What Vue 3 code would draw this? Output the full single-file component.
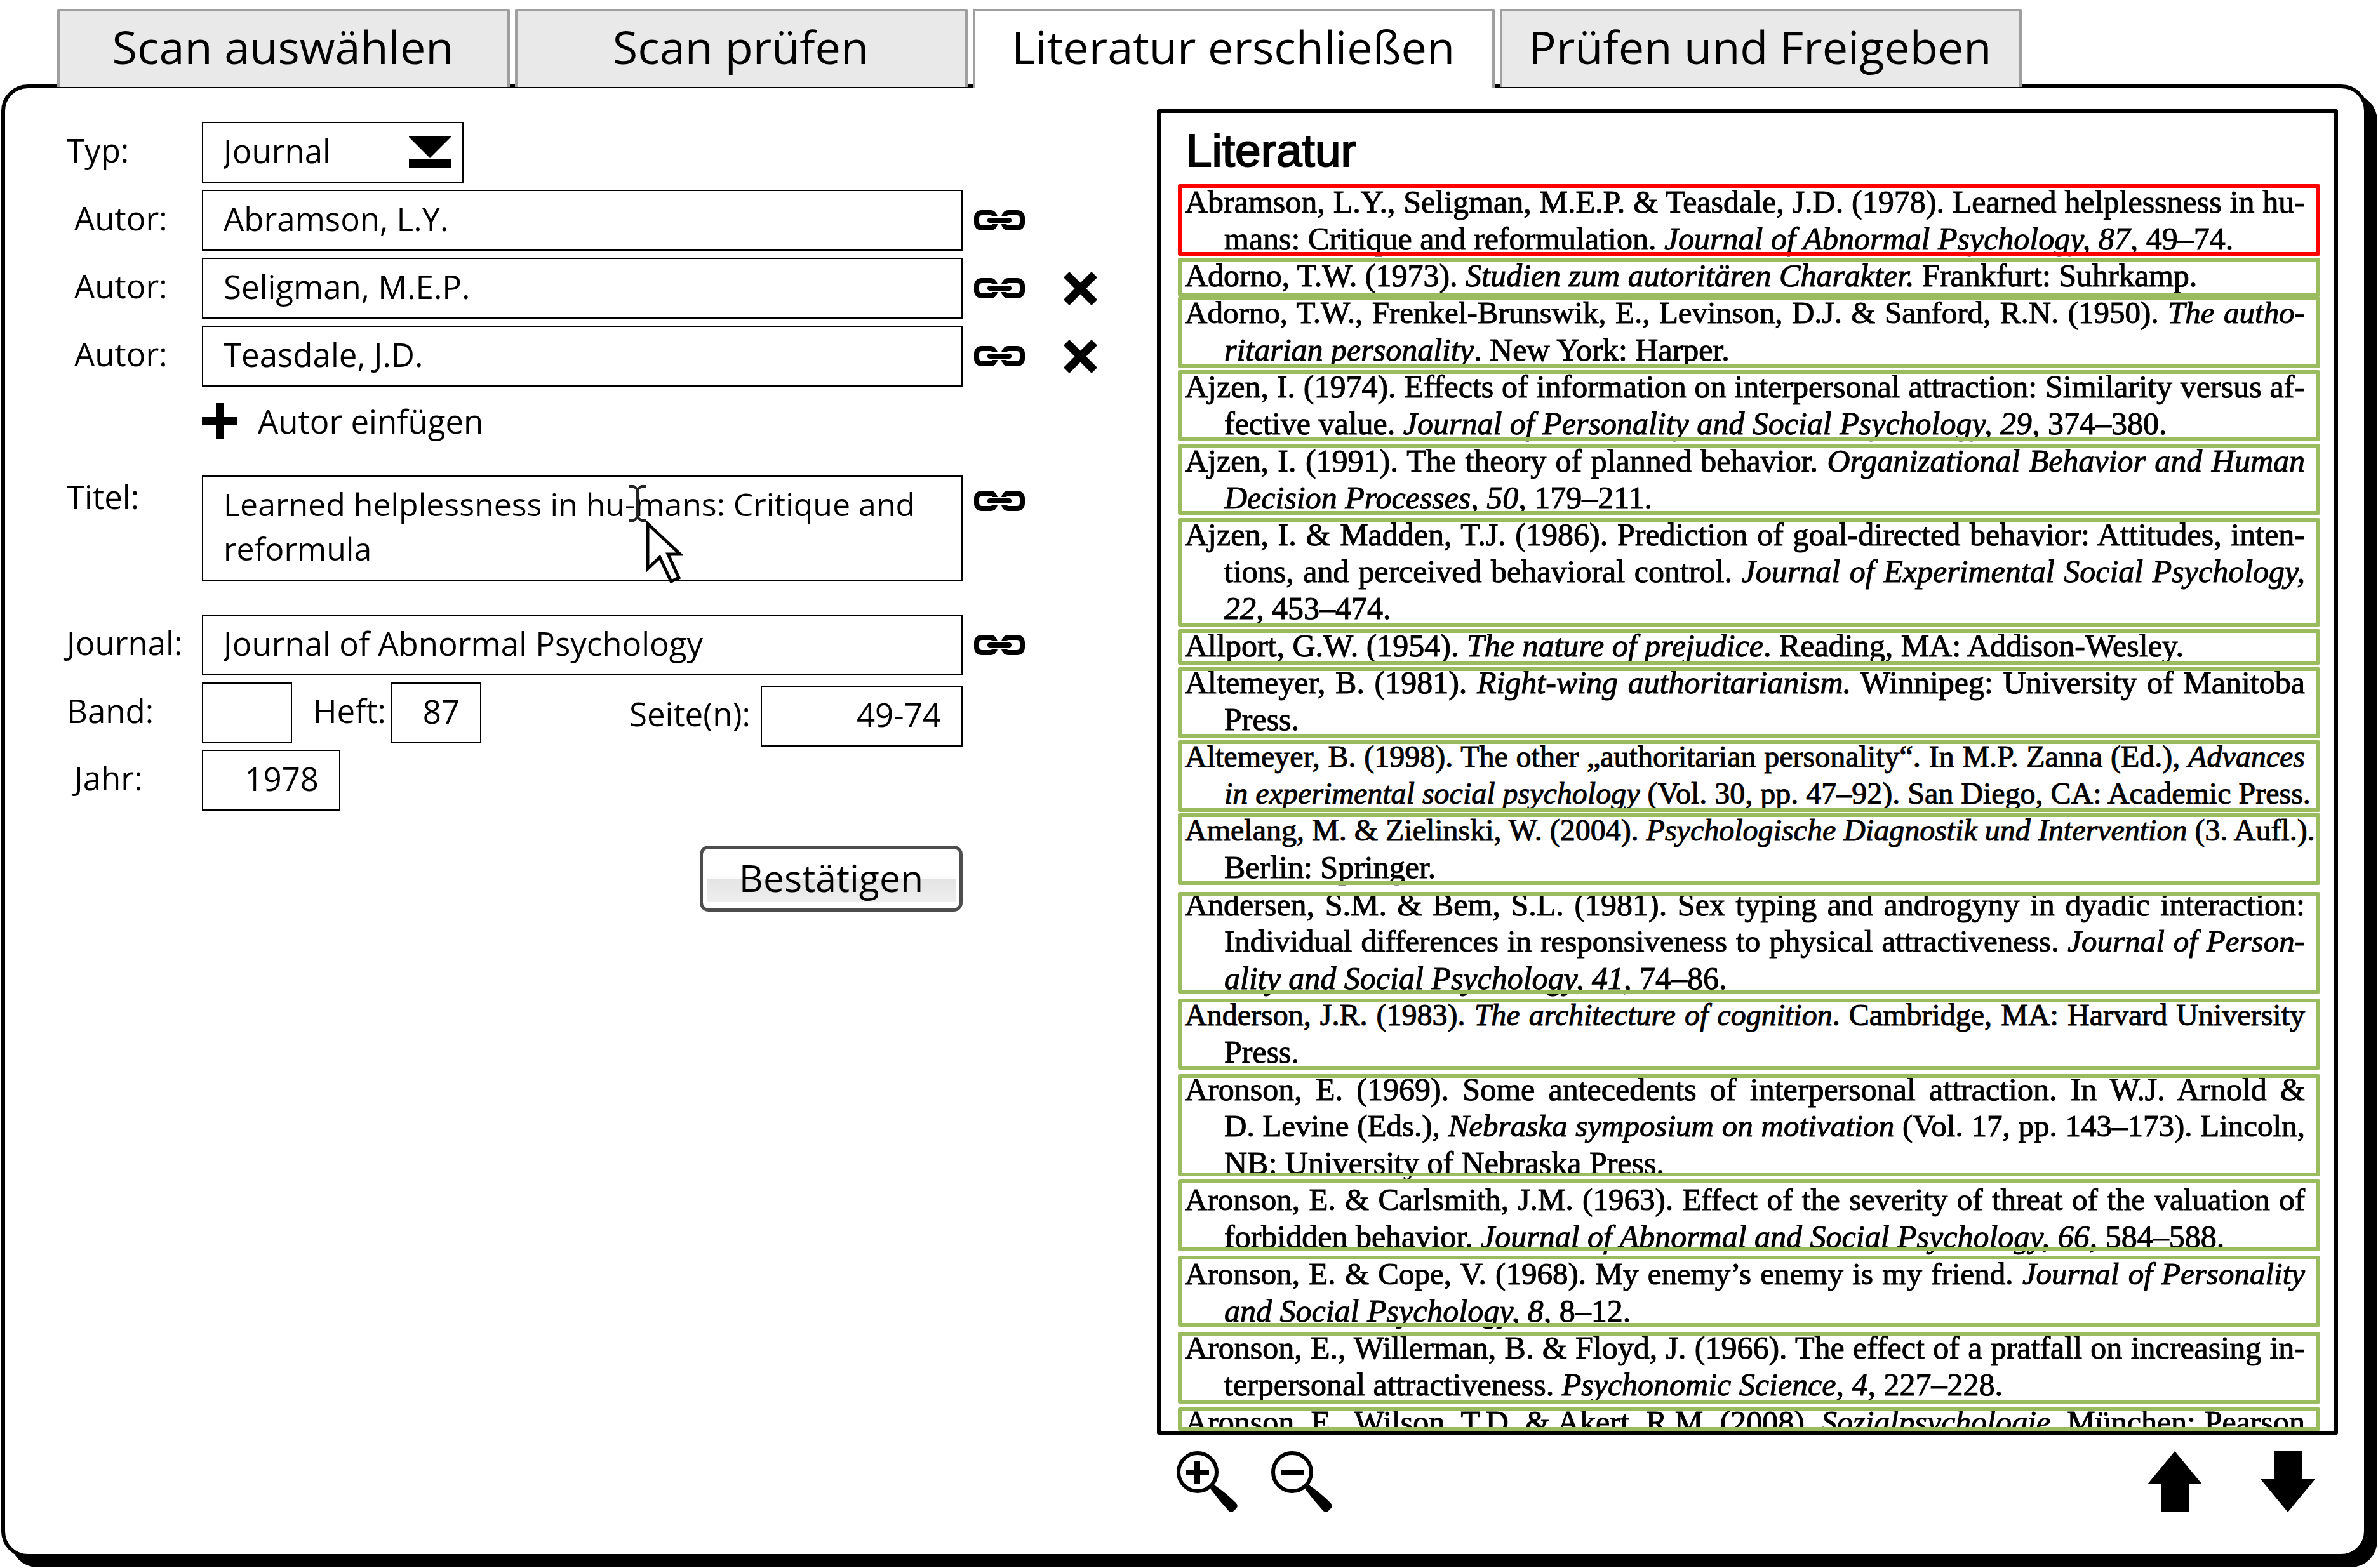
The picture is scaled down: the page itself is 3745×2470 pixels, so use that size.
<script setup>
import { ref } from 'vue'

const tabs = ['Scan auswählen', 'Scan prüfen', 'Literatur erschließen', 'Prüfen und Freigeben']
const active = ref(2)

const typ = ref('Journal')
const authors = ref(['Abramson, L.Y.', 'Seligman, M.E.P.', 'Teasdale, J.D.'])
const title = ref('Learned helplessness in hu-mans: Critique and\nreformula')
const journal = ref('Journal of Abnormal Psychology')
const band = ref('')
const heft = ref('87')
const seiten = ref('49-74')
const jahr = ref('1978')

// top / height: detected region of each reference, relative to its first text line.
// Text between asterisks is set in italics. snug / tight: indexes of lines that
// hold more words than the column takes at the normal size.
const entries = [
  { top: 1, height: 113, lines: ['Abramson, L.Y., Seligman, M.E.P. & Teasdale, J.D. (1978). Learned helplessness in hu-', 'mans: Critique and reformulation. *Journal of Abnormal Psychology, 87,* 49–74.'] },
  { top: 1, height: 61, lines: ['Adorno, T.W. (1973). *Studien zum autoritären Charakter.* Frankfurt: Suhrkamp.'] },
  { top: 3, height: 113, snug: [0], lines: ['Adorno, T.W., Frenkel-Brunswik, E., Levinson, D.J. & Sanford, R.N. (1950). *The autho-*', '*ritarian personality*. New York: Harper.'] },
  { top: 3, height: 112, lines: ['Ajzen, I. (1974). Effects of information on interpersonal attraction: Similarity versus af-', 'fective value. *Journal of Personality and Social Psychology, 29,* 374–380.'] },
  { top: 2, height: 112, lines: ['Ajzen, I. (1991). The theory of planned behavior. *Organizational Behavior and Human*', '*Decision Processes, 50,* 179–211.'] },
  { top: 3, height: 171, lines: ['Ajzen, I. & Madden, T.J. (1986). Prediction of goal-directed behavior: Attitudes, inten-', 'tions, and perceived behavioral control. *Journal of Experimental Social Psychology,*', '*22,* 453–474.'] },
  { top: 3, height: 56, lines: ['Allport, G.W. (1954). *The nature of prejudice*. Reading, MA: Addison-Wesley.'] },
  { top: 5, height: 112, lines: ['Altemeyer, B. (1981). *Right-wing authoritarianism.* Winnipeg: University of Manitoba', 'Press.'] },
  { top: 3, height: 113, tight: [0, 1], lines: ['Altemeyer, B. (1998). The other „authoritarian personality“. In M.P. Zanna (Ed.), *Advances*', '*in experimental social psychology* (Vol. 30, pp. 47–92). San Diego, CA: Academic Press.'] },
  { top: 2, height: 113, tight: [0], lines: ['Amelang, M. & Zielinski, W. (2004). *Psychologische Diagnostik und Intervention* (3. Aufl.).', 'Berlin: Springer.'] },
  { top: 9, height: 161, snug: [1], lines: ['Andersen, S.M. & Bem, S.L. (1981). Sex typing and androgyny in dyadic interaction:', 'Individual differences in responsiveness to physical attractiveness. *Journal of Person-*', '*ality and Social Psychology, 41,* 74–86.'] },
  { top: 3, height: 112, tight: [0], lines: ['Anderson, J.R. (1983). *The architecture of cognition*. Cambridge, MA: Harvard University', 'Press.'] },
  { top: 5, height: 161, snug: [1], lines: ['Aronson, E. (1969). Some antecedents of interpersonal attraction. In W.J. Arnold &', 'D. Levine (Eds.), *Nebraska symposium on motivation* (Vol. 17, pp. 143–173). Lincoln,', 'NB: University of Nebraska Press.'] },
  { top: -3, height: 113, snug: [0], lines: ['Aronson, E. & Carlsmith, J.M. (1963). Effect of the severity of threat of the valuation of', 'forbidden behavior. *Journal of Abnormal and Social Psychology, 66,* 584–588.'] },
  { top: 0, height: 112, snug: [0], lines: ['Aronson, E. & Cope, V. (1968). My enemy’s enemy is my friend. *Journal of Personality*', '*and Social Psychology, 8,* 8–12.'] },
  { top: 4, height: 113, lines: ['Aronson, E., Willerman, B. & Floyd, J. (1966). The effect of a pratfall on increasing in-', 'terpersonal attractiveness. *Psychonomic Science, 4,* 227–228.'] },
  { top: 6, height: 37, cut: true, lines: ['Aronson, E., Wilson, T.D. & Akert, R.M. (2008). *Sozialpsychologie.* München: Pearson'] },
]
const selected = ref(0)

const parts = (line) => line.split('*').map((text, i) => ({ text, italic: i % 2 === 1 })).filter((p) => p.text)
const lineClass = (entry, i) => ({
  full: entry.cut || i < entry.lines.length - 1 || entry.tight?.includes(i),
  hang: i > 0,
  snug: entry.snug?.includes(i),
  tight: entry.tight?.includes(i),
})
</script>

<template>
  <div class="page">
    <nav class="tabs">
      <button v-for="(tab, i) in tabs" :key="tab" type="button" class="tab" :class="{ active: i === active, wide: i > 1 }" @click="active = i">{{ tab }}</button>
    </nav>

    <svg class="defs" aria-hidden="true">
      <symbol id="link" viewBox="0 0 80 32">
        <path id="ring" d="M12 0H26C32 0 36 5 37 10H29C28 8.5 27 8 25 8H13Q8 8 8 13V19Q8 24 13 24H25C27 24 28 23.5 29 22H37C36 28 32 32 26 32H12C5 32 0 27 0 20V12C0 5 5 0 12 0Z" />
        <use href="#ring" transform="matrix(-1 0 0 1 80 0)" />
        <rect x="21" y="12" width="38" height="8" rx="4" />
      </symbol>
      <symbol id="lens" viewBox="0 0 96 96">
        <circle cx="33" cy="33" r="30" fill="none" stroke="#000" stroke-width="6" />
        <path d="M53 59L59 53Q78 66 93 81Q98 86 94 90L90 94Q86 98 82 94Q67 78 53 59Z" />
      </symbol>
    </svg>

    <main class="panel">
      <form class="form" @submit.prevent>
        <div class="row">
          <label class="label" for="typ">Typ:</label>
          <div class="select">
            <select id="typ" v-model="typ" class="box">
              <option>Journal</option>
            </select>
            <svg class="caret" viewBox="0 0 66 50" aria-hidden="true"><path d="M0 0H66V2L33 35L0 2ZM0 36H66V50H0Z" /></svg>
          </div>
        </div>

        <div v-for="(author, i) in authors" :key="i" class="row">
          <label class="label inset" :for="'autor' + i">Autor:</label>
          <input :id="'autor' + i" v-model="authors[i]" class="box" type="text" />
          <div class="actions">
            <button type="button" class="icon" aria-label="Verknüpfen"><svg width="80" height="32"><use href="#link" /></svg></button>
            <button v-if="i > 0" type="button" class="icon" aria-label="Entfernen">
              <svg width="53" height="53" viewBox="0 0 53 53"><path d="M0 9L9 0L26.5 17.5L44 0L53 9L35.5 26.5L53 44L44 53L26.5 35.5L9 53L0 44L17.5 26.5Z" /></svg>
            </button>
          </div>
        </div>

        <div class="row">
          <button type="button" class="icon add">
            <svg width="56" height="56" viewBox="0 0 56 56"><path d="M22 0H34V22H56V34H34V56H22V34H0V22H22Z" /></svg>
            <span>Autor einfügen</span>
          </button>
        </div>

        <div class="row title-row">
          <label class="label" for="titel">Titel:</label>
          <div class="title-field">
            <textarea id="titel" v-model="title" class="box" rows="2"></textarea>
            <svg class="ibeam" viewBox="0 0 26 58" aria-hidden="true"><path d="M0 2H7L13 7L19 2H26M13 7V51M0 56H7L13 51L19 56H26" /></svg>
            <svg class="pointer" viewBox="0 0 57 98" aria-hidden="true"><path d="M2 4L53 52H34L51 89L39 95L21 57L2 75Z" /></svg>
          </div>
          <div class="actions">
            <button type="button" class="icon" aria-label="Verknüpfen"><svg width="80" height="32"><use href="#link" /></svg></button>
          </div>
        </div>

        <div class="row journal-row">
          <label class="label" for="journal">Journal:</label>
          <input id="journal" v-model="journal" class="box" type="text" />
          <div class="actions">
            <button type="button" class="icon" aria-label="Verknüpfen"><svg width="80" height="32"><use href="#link" /></svg></button>
          </div>
        </div>

        <div class="numbers">
          <div class="row">
            <label class="label" for="band">Band:</label>
            <div class="issue">
              <input id="band" v-model="band" class="box short" type="text" />
              <label class="label" for="heft">Heft:</label>
              <input id="heft" v-model="heft" class="box short" type="text" />
              <div class="pages">
                <label class="label" for="seiten">Seite(n):</label>
                <input id="seiten" v-model="seiten" class="box" type="text" />
              </div>
            </div>
          </div>
          <div class="row">
            <label class="label inset" for="jahr">Jahr:</label>
            <input id="jahr" v-model="jahr" class="box year" type="text" />
          </div>
        </div>

        <div class="row">
          <button type="submit" class="submit">Bestätigen</button>
        </div>
      </form>

      <section class="source">
        <div class="scan">
          <h1>Literatur</h1>
          <ol>
            <li v-for="(entry, n) in entries" :key="n" :class="{ selected: n === selected }" @click="selected = n">
              <span v-for="(line, i) in entry.lines" :key="i" class="line" :class="lineClass(entry, i)"><template v-for="(p, k) in parts(line)" :key="k"><em v-if="p.italic">{{ p.text }}</em><template v-else>{{ p.text }}</template></template></span>
              <span class="region" :style="{ top: entry.top + 'px', height: entry.height + 'px' }"></span>
            </li>
          </ol>
        </div>
        <div class="toolbar">
          <button type="button" class="icon" aria-label="Vergrößern">
            <svg width="96" height="96" viewBox="0 0 96 96"><use href="#lens" /><path d="M28 15H37V29H51V38H37V52H28V38H15V29H28Z" /></svg>
          </button>
          <button type="button" class="icon" aria-label="Verkleinern">
            <svg width="96" height="96" viewBox="0 0 96 96"><use href="#lens" /><path d="M15 29H51V38H15Z" /></svg>
          </button>
          <div class="paging">
            <button type="button" class="icon" aria-label="Nach oben">
              <svg width="86" height="96" viewBox="0 0 86 96"><path d="M43 0L86 52H65V96H21V52H0Z" /></svg>
            </button>
            <button type="button" class="icon" aria-label="Nach unten">
              <svg width="86" height="96" viewBox="0 0 86 96"><path d="M43 96L86 44H65V0H21V44H0Z" /></svg>
            </button>
          </div>
        </div>
      </section>
    </main>
  </div>
</template>

<style>
body {
  background: #fff;
}
</style>

<style scoped>
* {
  box-sizing: border-box;
}
.page {
  display: flex;
  flex-direction: column;
  height: 100vh;
  min-height: 1600px;
  padding: 14px 16px 16px 2px;
  font: 51px/96px "Open Sans", "Noto Sans", sans-serif;
  color: #000;
}
.defs {
  position: absolute;
  width: 0;
  height: 0;
}
svg {
  display: block;
}
button,
input,
select,
textarea {
  margin: 0;
  font: inherit;
  color: inherit;
}

.tabs {
  position: relative;
  display: flex;
  gap: 8px;
  padding-left: 88px;
  z-index: 1;
}
.tab {
  width: 713px;
  height: 123px;
  padding: 0 2px 10px 0;
  border: 4px solid #9f9f9f;
  border-bottom: 0;
  border-radius: 2px 2px 0 0;
  background: #e9e9e9;
  font-size: 72px;
  line-height: 108px;
  text-align: center;
}
.tab.wide {
  width: 822px;
}
.tab.active {
  margin-bottom: -2px;
  height: 125px;
  padding-bottom: 12px;
  background: #fff;
}

.panel {
  flex: 1;
  min-height: 0;
  display: grid;
  grid-template-columns: minmax(0, 1814fr) minmax(0, 1860fr);
  margin-top: -4px;
  padding-right: 41px;
  border: 6px solid #000;
  border-radius: 42px;
  background: #fff;
  box-shadow: 15px 15px 0 #000;
}

.form {
  display: flex;
  flex-direction: column;
  gap: 11px;
  padding: 53px 0 0 97px;
}
.row {
  display: grid;
  grid-template-columns: 213px minmax(0, 1fr) 306px;
  align-items: start;
}
.label {
  padding-bottom: 8px;
  line-height: 88px;
  white-space: nowrap;
}
.label.inset {
  padding-left: 12px;
}
.box {
  display: block;
  width: 100%;
  height: 96px;
  padding: 0 32px 6px;
  border: 2px solid #000;
  border-radius: 0;
  background: #fff;
  line-height: 86px;
  outline: 0;
}
.select {
  position: relative;
  width: 412px;
}
.select .box {
  appearance: none;
}
.caret {
  position: absolute;
  top: 22px;
  right: 20px;
  width: 66px;
  pointer-events: none;
}
.actions {
  display: flex;
  align-items: center;
  gap: 61px;
  height: 96px;
  padding-left: 18px;
}
.icon {
  padding: 0;
  border: 0;
  background: none;
  cursor: pointer;
}
.add {
  grid-column: 2;
  justify-self: start;
  display: flex;
  align-items: center;
  gap: 32px;
  line-height: 86px;
}
.title-row {
  margin-top: 32px;
}
.title-row .label {
  line-height: 66px;
}
.title-row .actions {
  height: 80px;
}
.title-field {
  position: relative;
}
.title-field .box {
  height: 166px;
  padding-top: 8px;
  font-size: 50px;
  line-height: 70px;
  resize: none;
  overflow: hidden;
}
.ibeam {
  position: absolute;
  top: 15px;
  left: 673px;
  width: 26px;
  fill: none;
  stroke: #222;
  stroke-width: 4;
}
.pointer {
  position: absolute;
  top: 72px;
  left: 700px;
  width: 57px;
  fill: #fff;
  stroke: #000;
  stroke-width: 5;
}
.journal-row {
  margin-top: 42px;
}
.numbers {
  display: flex;
  flex-direction: column;
  gap: 5px;
}
.numbers .box {
  text-align: right;
}
.issue {
  display: flex;
  align-items: flex-start;
  min-height: 101px;
}
.issue .short {
  width: 142px;
}
.issue > .label {
  margin: 0 8px 0 33px;
}
.pages {
  display: flex;
  align-self: flex-end;
  gap: 16px;
  margin-left: auto;
}
.pages .box {
  width: 318px;
}
.year {
  width: 218px;
}
.submit {
  grid-column: 2;
  justify-self: end;
  width: 414px;
  height: 104px;
  margin-top: 44px;
  padding: 0 0 4px;
  border: 5px solid #4d4d4d;
  border-radius: 14px;
  background: linear-gradient(#fff 40%, #fbfbfb 50%, #e4e4e4 51%, #eee) center / calc(100% - 12px) calc(100% - 20px) no-repeat #fff;
  font-size: 59px;
  line-height: 90px;
}

.source {
  display: flex;
  flex-direction: column;
  min-height: 0;
  padding-top: 33px;
}
.scan {
  flex: 1 1 0;
  min-height: 0;
  border: 6px solid #000;
  border-radius: 3px;
  overflow: hidden;
}
h1 {
  margin: 0;
  padding: 6px 0 0 40px;
  font: 73px/105px "Liberation Sans", Arial, sans-serif;
  -webkit-text-stroke: 2px #000;
}
ol {
  margin: 0;
  padding: 0 46px 0 38px;
  list-style: none;
  font: 50px/58px "Liberation Serif", "Times New Roman", serif;
  -webkit-text-stroke: 1px #000;
}
li {
  position: relative;
}
li:nth-child(even) {
  margin-bottom: 1px;
}
.line {
  display: block;
  white-space: nowrap;
}
.line.hang {
  padding-left: 62px;
}
.line.full {
  text-align: justify;
  text-align-last: justify;
}
.line.snug {
  font-size: 49px;
}
.line.tight {
  font-size: 48px;
}
.region {
  position: absolute;
  left: -11px;
  right: -24px;
  border: 6px solid #9bbb5f;
  border-radius: 3px;
}
.selected .region {
  border-color: #f00;
}
.toolbar {
  display: flex;
  gap: 53px;
  padding: 26px 36px 66px 31px;
}
.paging {
  display: flex;
  gap: 92px;
  margin-left: auto;
}
</style>
